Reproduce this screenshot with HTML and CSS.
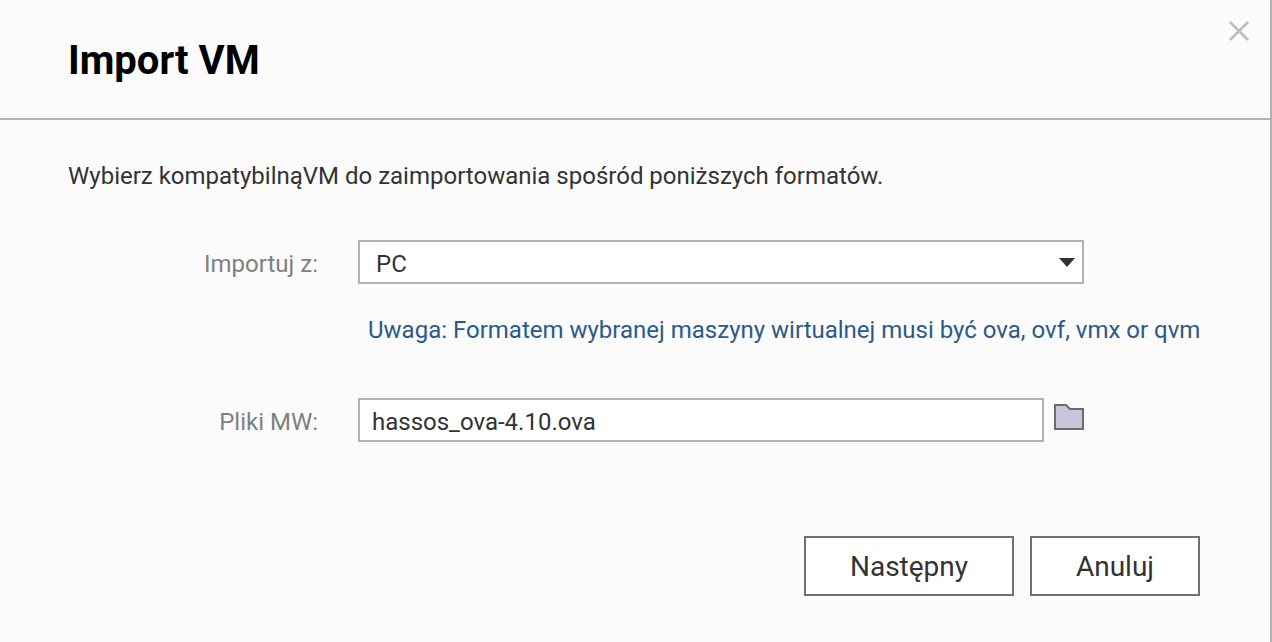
FILE: index.html
```html
<!DOCTYPE html>
<html lang="pl">
<head>
<meta charset="utf-8">
<title>Import VM</title>
<link rel="stylesheet" href="styles.css">
</head>
<body>
<div class="dialog">
  <header class="head">
    <h1 class="title">Import VM</h1>
    <svg class="close" width="22" height="22" viewBox="0 0 22 22"><path d="M2 2 L20 20 M20 2 L2 20" stroke="#bdbdbd" stroke-width="2.6" fill="none"/></svg>
  </header>
  <main class="body">
    <p class="intro">Wybierz kompatybilnąVM do zaimportowania spośród poniższych formatów.</p>
    <div class="row row-select">
      <span class="label">Importuj z:</span>
      <div class="select"><span class="value">PC</span><i class="caret"></i></div>
    </div>
    <p class="note">Uwaga: Formatem wybranej maszyny wirtualnej musi być ova, ovf, vmx or qvm</p>
    <div class="row row-file">
      <span class="label">Pliki MW:</span>
      <div class="input"><span class="value">hassos_ova-4.10.ova</span></div>
      <svg class="folder" width="30" height="26" viewBox="0 0 30 26"><path d="M1 1 H12 L16 5 H29 V25 H1 Z" fill="#c9c3dc" stroke="#6b6b6e" stroke-width="2"/></svg>
    </div>
    <div class="actions">
      <button class="btn btn-next">Następny</button>
      <button class="btn btn-cancel">Anuluj</button>
    </div>
  </main>
</div>
</body>
</html>
```
FILE: styles.css
```css
* { box-sizing: border-box; }
html, body { margin: 0; height: 100%; }
body { background: #fbfbfb; font-family: Roboto, "Liberation Sans", sans-serif; color: #333; overflow: hidden; }
.dialog { width: 1272px; height: 642px; border-right: 2px solid #b3b3b3; display: flex; flex-direction: column; }
.head { height: 120px; border-bottom: 2px solid #b3b3b3; padding: 0 0 0 68px; display: flex; justify-content: space-between; align-items: flex-start; }
.title { margin: 37px 0 0; font-size: 40px; line-height: 48px; font-weight: 700; color: #000; }
.close { margin: 20px 20px 0 0; }
.body { padding: 0 70px 0 68px; flex: 1; display: flex; flex-direction: column; }
.intro { margin: 40px 0 0; font-size: 24px; line-height: 32px; color: #333; }
.row { display: flex; align-items: center; }
.row-select { margin-top: 48px; }
.row-file { margin-top: 52px; }
.label { width: 250px; padding-top: 4px; text-align: right; font-size: 24px; color: #808080; margin-right: 40px; }
.select { width: 726px; height: 44px; background: #fff; border: 2px solid #b3b3b3; padding-left: 16px; display: flex; align-items: center; justify-content: space-between; font-size: 24px; color: #333; }
.value { padding-top: 4px; }
.caret { width: 0; height: 0; border-left: 8px solid transparent; border-right: 8px solid transparent; border-top: 9px solid #333; margin-right: 7px; }
.note { margin: 30px 0 0 300px; font-size: 24px; line-height: 32px; color: #2a5a8a; white-space: nowrap; }
.input { width: 686px; height: 44px; background: #fff; border: 2px solid #b3b3b3; padding-left: 12px; display: flex; align-items: center; font-size: 24px; color: #333; }
.folder { margin: -6px 0 0 10px; }
.actions { margin-top: 94px; display: flex; justify-content: flex-end; gap: 16px; }
.btn { height: 60px; background: #fff; border: 2px solid #707070; font: 400 28px Roboto, sans-serif; color: #333; padding: 0; }
.btn-next { width: 210px; }
.btn-cancel { width: 170px; }
```
